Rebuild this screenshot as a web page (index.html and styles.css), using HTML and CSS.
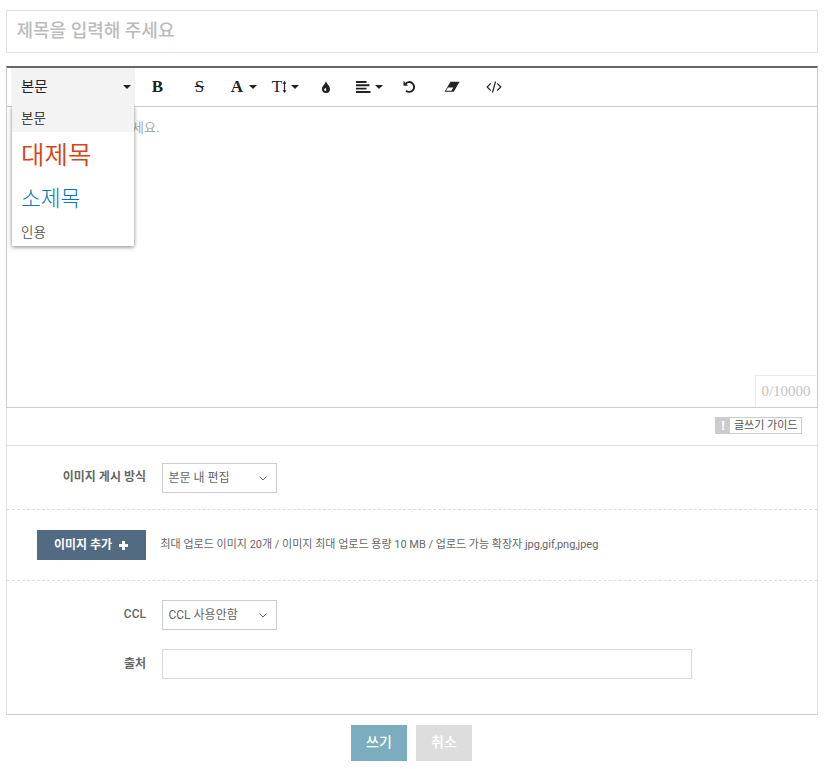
FILE: index.html
```html
<!DOCTYPE html>
<html lang="ko">
<head>
<meta charset="utf-8">
<title>글쓰기</title>
<link rel="stylesheet" href="styles.css">
</head>
<body>
<form class="write">
  <div class="title-field">제목을 입력해 주세요</div>

  <section class="editor">
    <div class="toolbar">
      <div class="format">
        <span class="format-label">본문</span><i class="caret"></i>
        <div class="format-menu">
          <div class="option option-body">본문</div>
          <div class="option option-h1">대제목</div>
          <div class="option option-h2">소제목</div>
          <div class="option option-quote">인용</div>
        </div>
      </div>
      <span class="tool tool-bold">B</span>
      <span class="tool tool-strike"><span class="strike">S</span></span>
      <span class="tool tool-color">A<i class="caret"></i></span>
      <span class="tool tool-size">T<svg width="5" height="12" viewBox="0 0 5 12"><path d="M2.500 1v10" stroke="currentColor" stroke-width="1.200"/><path d="M.6 2.800L2.500 0l1.900 2.800zM.6 9.200L2.500 12l1.900-2.800z" fill="currentColor"/></svg><i class="caret"></i></span>
      <span class="tool tool-drop"><svg width="10" height="12" viewBox="0 0 10 12"><path d="M5 0C4.500 2.800 1 5 1 7.900a4 4 0 0 0 8 0C9 5 5.500 2.800 5 0z" fill="currentColor"/><path d="M4.300 6.800c-.5.800-1.200 1.300-1.200 2a1.100 1.100 0 0 0 2.200 0c0-.7-.7-1.200-1-2z" fill="#fff"/></svg></span>
      <span class="tool tool-align"><svg width="15" height="12" viewBox="0 0 15 12"><path d="M0 1h10.500M0 4.300h13.500M0 7.600h10.500M0 11h14.500" stroke="currentColor" stroke-width="1.900"/></svg><i class="caret"></i></span>
      <span class="tool tool-undo"><svg width="13" height="12" viewBox="0 0 13 12"><path d="M2.300 3A4.900 4.900 0 1 1 3 9.700" fill="none" stroke="currentColor" stroke-width="1.900"/><path d="M.5 0v4.700h4.700z" fill="currentColor"/></svg></span>
      <span class="tool tool-eraser"><svg width="16" height="12" viewBox="0 0 16 12"><path d="M6.500.8h9l-5.700 10H.5z" fill="currentColor"/><path d="M3.900 6.600h5.400L7.400 9.800H2z" fill="#fff"/></svg></span>
      <span class="tool tool-code"><svg width="16" height="12" viewBox="0 0 16 12"><path d="M4.800 2.300L1.200 6l3.600 3.700M11.200 2.300L14.800 6l-3.600 3.700M9.500.5l-3 11" fill="none" stroke="currentColor" stroke-width="1.200"/></svg></span>
    </div>
    <div class="content">
      <p class="placeholder">세요.</p>
      <span class="counter">0/10000</span>
    </div>
  </section>

  <section class="panel">
    <div class="guide-row">
      <span class="guide"><b class="guide-mark">!</b><span class="guide-text">글쓰기 가이드</span></span>
    </div>
    <div class="group group-mode">
      <span class="label">이미지 게시 방식</span>
      <span class="select">본문 내 편집<svg width="8" height="5" viewBox="0 0 8 5"><path d="M.6.500L4 4 7.400.5" fill="none" stroke="currentColor"/></svg></span>
    </div>
    <div class="group group-image">
      <span class="add-image">이미지 추가<svg width="9" height="9" viewBox="0 0 9 9"><path d="M4.500 0v9M0 4.500h9" stroke="#fff" stroke-width="3"/></svg></span>
      <span class="hint">최대 업로드 이미지 20개 / 이미지 최대 업로드 용량 10 MB / 업로드 가능 확장자 jpg,gif,png,jpeg</span>
    </div>
    <div class="group group-source">
      <span class="label label-ccl">CCL</span>
      <span class="select">CCL 사용안함<svg width="8" height="5" viewBox="0 0 8 5"><path d="M.6.500L4 4 7.400.5" fill="none" stroke="currentColor"/></svg></span>
      <span class="label label-origin">출처</span>
      <span class="input"></span>
    </div>
  </section>

  <div class="actions">
    <span class="action action-submit">쓰기</span>
    <span class="action action-cancel">취소</span>
  </div>
</form>
</body>
</html>
```
FILE: styles.css
```css
* { box-sizing: border-box; }
body {
  margin: 0;
  background: #fff;
  color: #666;
  font: 12px/18px Roboto, "Noto Sans CJK KR", sans-serif;
}
svg { display: block; flex: none; }
.write { width: 812px; margin: 10px 0 0 6px; }
.title-field {
  height: 43px;
  padding: 0 9.500px;
  border: 1px solid #e1e1e1;
  color: #bbb;
  font-size: 18px;
  font-weight: 500;
  line-height: 39px;
}

.editor {
  height: 342px;
  margin-top: 13px;
  border: 1px solid #ccc;
  border-top: 2px solid #666;
}
.toolbar {
  display: flex;
  height: 39px;
  padding-left: 4px;
  border-bottom: 1px solid #ccc;
  color: #222;
}
.format {
  position: relative;
  display: flex;
  align-items: center;
  justify-content: space-between;
  width: 124px;
  margin-right: 2px;
  padding: 0 4px 0 10px;
  background: #f3f3f3;
  font-size: 14.500px;
}
.format-label { padding-top: 2px; }
.caret {
  flex: none;
  border: 4px solid transparent;
  border-top-color: currentColor;
  border-bottom: 0;
}
.format-menu {
  position: absolute;
  z-index: 1;
  top: 38px;
  left: 1px;
  width: 122px;
  height: 140px;
  background: #fff;
  box-shadow: 0 1px 4px rgba(0, 0, 0, .5);
  clip-path: inset(0 -6px -6px -6px);
}
.option { padding-left: 9px; font-size: 13.500px; font-weight: 350; }
.option-body { height: 26px; line-height: 24px; background: #f3f3f3; }
.option-h1 { height: 46px; color: #d84315; font-size: 25.500px; line-height: 46px; }
.option-h2 { height: 44px; color: #0277bd; font-size: 21.500px; font-weight: 300; line-height: 42px; }
.option-quote { color: #555; line-height: 20px; }

.tool {
  display: flex;
  align-items: center;
  justify-content: center;
  font: 17px/38px "Liberation Serif", serif;
}
.tool .caret { margin-left: 6px; }
.tool-bold, .tool-strike { width: 42px; padding-right: 1px; }
.tool-bold, .tool-color { font-weight: bold; }
.strike { text-decoration: line-through; padding: 0 2px; }
.tool-color { width: 46px; }
.tool-size { width: 37px; }
.tool-size .caret { margin-left: 4px; }
.tool-drop { width: 43px; }
.tool-align { width: 45px; }
.tool-align .caret { margin-left: 4px; }
.tool-undo { width: 35px; }
.tool-eraser { width: 49px; }
.tool-code { width: 36px; }

.content { position: relative; height: 300px; padding: 11px 0 0 125px; }
.placeholder { margin: 0; color: #aaa; font-size: 13px; line-height: 20px; }
.counter {
  position: absolute;
  right: 1px;
  bottom: 0;
  width: 61px;
  height: 32px;
  border: solid #eaeaea;
  border-width: 1px 0 0 1px;
  color: #c4c4c4;
  font: 15px/31px "Liberation Serif", serif;
  text-align: center;
}

.panel {
  height: 307px;
  border: solid #e1e1e1;
  border-width: 0 1px 1px;
  border-bottom-color: #ccc;
}
.guide-row {
  display: flex;
  justify-content: flex-end;
  height: 38px;
  padding: 9px 15px 0 0;
  border-bottom: 1px solid #e1e1e1;
}
.guide {
  display: flex;
  width: 87px;
  height: 17px;
  border: 1px solid #ccc;
  color: #555;
  font-size: 11px;
  line-height: 15px;
}
.guide-mark { width: 14px; background: #ccc; color: #fff; font-size: 13px; text-align: center; }
.guide-text { padding-left: 4px; white-space: nowrap; }
.group {
  display: grid;
  grid-template-columns: 139px 1fr;
  column-gap: 16px;
  align-content: start;
}
.group-mode { height: 64px; padding-top: 17px; border-bottom: 1px dashed #ddd; }
.group-image { height: 71px; padding-top: 20px; border-bottom: 1px dashed #ddd; }
.group-source { padding-top: 19px; row-gap: 19px; }
.label { font-weight: 700; line-height: 28px; text-align: right; }
.label-ccl { font-weight: 500; }
.label-origin { line-height: 30px; }
.select {
  display: flex;
  align-items: center;
  justify-content: space-between;
  width: 115px;
  height: 30px;
  padding: 0 9px 0 5.500px;
  border: 1px solid #ccc;
}
.select svg { margin-top: 1px; }
.input { width: 530px; height: 30px; border: 1px solid #d8d8d8; }
.add-image {
  display: flex;
  align-items: center;
  justify-content: center;
  gap: 7px;
  height: 30px;
  margin-left: 30px;
  padding-right: 1px;
  background: #526b82;
  color: #fff;
  font-weight: 700;
}
.hint { margin-left: -1.500px; font-size: 11px; line-height: 29px; white-space: nowrap; }

.actions { display: flex; justify-content: center; gap: 9px; margin-top: 10px; padding-right: 1px; }
.action {
  width: 56px;
  height: 36px;
  color: #fff;
  font-size: 14px;
  font-weight: 500;
  line-height: 34px;
  text-align: center;
}
.action-submit { background: #7aaebf; }
.action-cancel { background: #ddd; }
```
